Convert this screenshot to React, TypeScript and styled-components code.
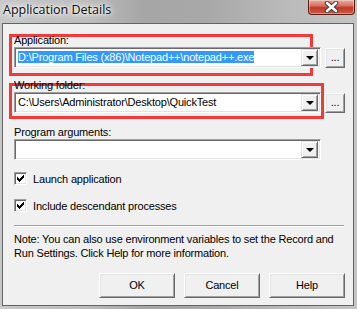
import React from 'react';
import styled, { createGlobalStyle } from 'styled-components';

const Global = createGlobalStyle`
  html, body { margin: 0; padding: 0; }
  body {
    width: 357px; height: 309px; overflow: hidden;
    font-family: "Liberation Sans", Arial, sans-serif;
    font-size: 11px; color: #000; letter-spacing: -0.18px;
  }
`;

const Window = styled.div`
  position: relative;
  width: 357px; height: 309px; box-sizing: border-box;
  display: flex; flex-direction: column;
  background: linear-gradient(90deg, #c8c8c8 0%, #bcbcbc 25%, #a6a6a6 40%, #a8a8a8 58%, #bababa 80%, #c4c4c4 100%);
`;

const TitleBar = styled.div`
  height: 23px; display: flex; align-items: flex-start; justify-content: space-between;
`;

const Title = styled.div`
  font-family: "Open Sans", "Noto Sans", sans-serif;
  font-size: 12.5px; line-height: 20px; padding-left: 3px; color: #0c0c0c; letter-spacing: 0;
  text-shadow: 0 0 6px #fff, 0 0 10px #fff, 0 0 3px #fff;
`;

const CloseBtn = styled.div`
  width: 47px; height: 15px; margin-right: 2px; box-sizing: border-box;
  border: 1px solid #5b1e16; border-top: none; border-radius: 0 0 4px 4px;
  background: linear-gradient(180deg, #e8ab9d 0%, #d77260 40%, #c23a26 55%, #cd5b45 100%);
  box-shadow: inset 0 0 0 1px rgba(255,255,255,0.35);
  display: flex; align-items: center; justify-content: center;
`;

const Frame = styled.div`
  flex: 1; display: flex; padding: 0 3px 3px 2px;
`;

const Client = styled.div`
  flex: 1; box-sizing: border-box;
  border: 1px solid #646464;
  background: #f0f0f0;
  display: flex; flex-direction: column;
  padding: 10px 8px 0 11px;
`;

const Body = styled.div`
  position: relative; z-index: 1; display: flex; flex-direction: column;
`;

const Label = styled.div<{ $mt?: number }>`
  line-height: 13px; height: 13px; margin-top: ${p => p.$mt ?? 0}px; color: #000;
`;

const FieldRow = styled.div`
  display: flex; align-items: center; gap: 4px;
`;

const Combo = styled.div<{ $w: number }>`
  width: ${p => p.$w}px; height: 21px; box-sizing: border-box;
  border: 1px solid; border-color: #a0a0a0 #ffffff #ffffff #a0a0a0;
  box-shadow: inset 1px 1px 0 #696969, inset -1px -1px 0 #e3e3e3;
  background: #fff; display: flex; align-items: center;
  padding: 2px;
`;

const ComboText = styled.div`
  flex: 1; padding-left: 1px; white-space: nowrap; overflow: hidden; line-height: 13px;
`;

const Selected = styled.span`
  background: #3399ff; color: #fff;
`;

const DropBtn = styled.div`
  width: 17px; height: 17px; box-sizing: border-box;
  border: 1px solid; border-color: #e3e3e3 #696969 #696969 #e3e3e3;
  box-shadow: inset 1px 1px 0 #fff, inset -1px -1px 0 #a0a0a0;
  background: #f0f0f0; display: flex; align-items: center; justify-content: center;
`;

const Arrow = styled.div`
  width: 0; height: 0; margin-top: 1px;
  border-left: 4px solid transparent; border-right: 4px solid transparent; border-top: 4px solid #000;
`;

const RaisedButton = styled.div<{ $w: number; $h: number }>`
  width: ${p => p.$w}px; height: ${p => p.$h}px; box-sizing: border-box;
  border: 1px solid; border-color: #ffffff #696969 #696969 #ffffff;
  box-shadow: inset 1px 1px 0 #e3e3e3, inset -1px -1px 0 #a0a0a0;
  background: #f0f0f0; display: flex; align-items: center; justify-content: center;
  line-height: 13px;
`;

const CheckRow = styled.div<{ $mt: number }>`
  display: flex; align-items: center; gap: 6px; margin-top: ${p => p.$mt}px; height: 13px;
`;

const CheckBox = styled.div`
  width: 13px; height: 13px; box-sizing: border-box;
  border: 1px solid; border-color: #a0a0a0 #fff #fff #a0a0a0;
  box-shadow: inset 1px 1px 0 #696969, inset -1px -1px 0 #e3e3e3;
  background: #fff; display: flex; align-items: center; justify-content: center;
`;

const Separator = styled.div`
  height: 0; margin-top: 13px; margin-right: 1px;
  border-top: 1px solid #a0a0a0; border-bottom: 1px solid #fff;
`;

const Note = styled.div`
  margin-top: 5px; line-height: 14px;
`;

const NoteLine = styled.div`
  white-space: nowrap;
`;

const ButtonBar = styled.div`
  display: flex; justify-content: flex-end; gap: 9px; margin-top: 13px;
`;

const RedBox = styled.div<{ $l: number; $t: number; $w: number; $h: number }>`
  position: absolute; left: ${p => p.$l}px; top: ${p => p.$t}px;
  width: ${p => p.$w}px; height: ${p => p.$h}px; box-sizing: border-box;
  border: 3px solid #f23a3a; z-index: 0; pointer-events: none;
`;

const Check = () => (
  <svg width="7" height="7" viewBox="0 0 7 7" shapeRendering="crispEdges">
    <path d="M0 2h1v3h-1z M1 3h1v3h-1z M2 4h1v3h-1z M3 3h1v3h-1z M4 2h1v3h-1z M5 1h1v3h-1z M6 0h1v3h-1z" fill="#000" />
  </svg>
);

const CloseX = () => (
  <svg width="15" height="12" viewBox="0 0 15 12">
    <path d="M3 2 L12 10 M12 2 L3 10" stroke="#3a3a3a" strokeWidth="4.4" strokeLinecap="round" />
    <path d="M3 2 L12 10 M12 2 L3 10" stroke="#fff" strokeWidth="2.6" strokeLinecap="round" />
  </svg>
);

export default function App() {
  return (
    <>
      <Global />
      <Window>
        <TitleBar>
          <Title>Application Details</Title>
          <CloseBtn><CloseX /></CloseBtn>
        </TitleBar>
        <RedBox $l={9} $t={34} $w={304} $h={42} />
        <RedBox $l={9} $t={83} $w={315} $h={36} />
        <Frame>
          <Client>
            <Body>
              <Label>Application:</Label>
              <FieldRow>
                <Combo $w={307}>
                  <ComboText><Selected>D:\Program Files (x86)\Notepad++\notepad++.exe</Selected></ComboText>
                  <DropBtn><Arrow /></DropBtn>
                </Combo>
                <RaisedButton $w={20} $h={20}>...</RaisedButton>
              </FieldRow>
              <Label $mt={11}>Working folder:</Label>
              <FieldRow>
                <Combo $w={307}>
                  <ComboText>C:\Users\Administrator\Desktop\QuickTest</ComboText>
                  <DropBtn><Arrow /></DropBtn>
                </Combo>
                <RaisedButton $w={20} $h={20}>...</RaisedButton>
              </FieldRow>
              <Label $mt={13}>Program arguments:</Label>
              <FieldRow>
                <Combo $w={307}>
                  <ComboText></ComboText>
                  <DropBtn><Arrow /></DropBtn>
                </Combo>
              </FieldRow>
              <CheckRow $mt={12}>
                <CheckBox><Check /></CheckBox>
                <span>Launch application</span>
              </CheckRow>
              <CheckRow $mt={14}>
                <CheckBox><Check /></CheckBox>
                <span>Include descendant processes</span>
              </CheckRow>
              <Separator />
              <Note>
                <NoteLine>Note: You can also use environment variables to set the Record and</NoteLine>
                <NoteLine>Run Settings. Click Help for more information.</NoteLine>
              </Note>
              <ButtonBar>
                <RaisedButton $w={76} $h={25}>OK</RaisedButton>
                <RaisedButton $w={76} $h={25}>Cancel</RaisedButton>
                <RaisedButton $w={76} $h={25}>Help</RaisedButton>
              </ButtonBar>
            </Body>
          </Client>
        </Frame>
      </Window>
    </>
  );
}
